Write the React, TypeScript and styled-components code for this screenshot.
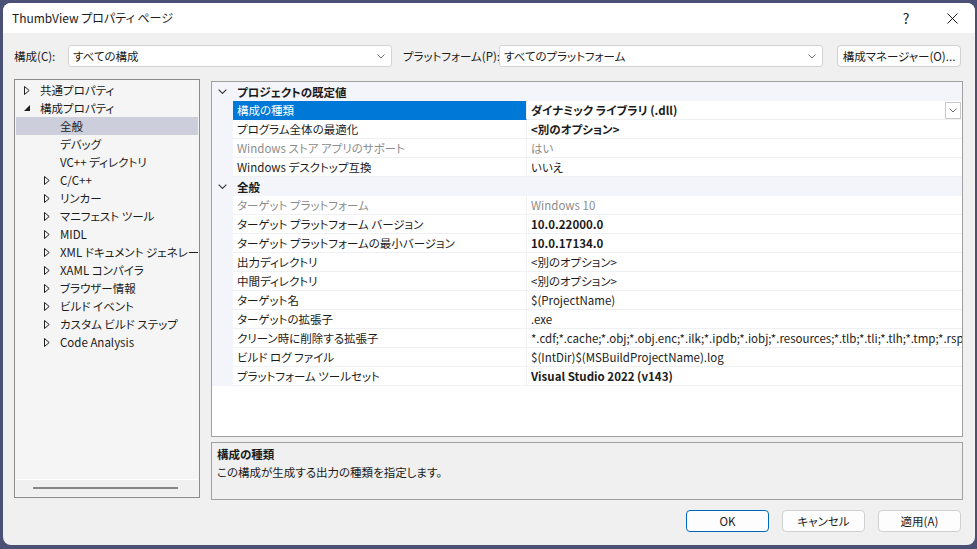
import { FC } from 'react';
import styled, { createGlobalStyle, css } from 'styled-components';

const GlobalStyle = createGlobalStyle`
  html, body {
    margin: 0;
    padding: 0;
    background: #4b5174;
  }
  body {
    font-family: "Noto Sans CJK JP", "Noto Sans", sans-serif;
    font-size: 11.5px;
    color: #1b1b1b;
    font-feature-settings: "palt";
  }
  * { box-sizing: border-box; }
`;

const Window = styled.div`
  margin: 3px;
  width: 972px;
  height: 542px;
  border-radius: 8px;
  background: #f0f0f0;
  overflow: hidden;
  display: flex;
  flex-direction: column;
`;

const TitleBar = styled.div`
  height: 30px;
  background: #ffffff;
  display: flex;
  align-items: center;
  padding-left: 9px;
  flex-shrink: 0;
`;

const Title = styled.div`
  flex: 1;
  font-size: 12px;
  line-height: 30px;
`;

const CaptionButton = styled.div`
  width: 46px;
  height: 30px;
  display: flex;
  align-items: center;
  justify-content: center;
  font-size: 14px;
  color: #1b1b1b;
`;

const Body = styled.div`
  flex: 1;
  display: flex;
  flex-direction: column;
  padding: 12px 12px 13px 11px;
`;

const Toolbar = styled.div`
  display: flex;
  align-items: center;
  height: 22px;
  padding-right: 2px;
`;

const FieldLabel = styled.span<{ $width: number; $indent?: number }>`
  width: ${p => p.$width}px;
  padding-left: ${p => p.$indent ?? 0}px;
  flex-shrink: 0;
  white-space: nowrap;
`;

const Combo = styled.div<{ $width?: number }>`
  ${p => (p.$width ? css`width: ${p.$width}px; flex-shrink: 0;` : css`flex: 1; min-width: 0;`)}
  height: 22px;
  background: #ffffff;
  border: 1px solid #d3d3d3;
  border-radius: 3px;
  display: flex;
  align-items: center;
  padding: 0 6px 0 4px;
  span { flex: 1; white-space: nowrap; }
`;

const Button = styled.button<{ $primary?: boolean; $width: number }>`
  width: ${p => p.$width}px;
  height: 22px;
  background: #fdfdfd;
  border: 1px solid ${p => (p.$primary ? '#0067c0' : '#d0d0d0')};
  border-radius: 4px;
  font: inherit;
  color: #1b1b1b;
  padding: 0;
  flex-shrink: 0;
`;

const ToolbarButton = styled(Button)`
  margin-left: 14px;
`;

const Main = styled.div`
  display: grid;
  grid-template-columns: 186px minmax(0, 1fr);
  column-gap: 11px;
  margin-top: 12px;
`;

const Tree = styled.div`
  height: 419px;
  border: 1px solid #8b8b8b;
  background: #f5f5f5;
  display: flex;
  flex-direction: column;
  padding: 1px;
`;

const TreeItems = styled.div`
  flex: 1;
`;

const TreeRow = styled.div<{ $level: number; $selected?: boolean }>`
  height: 18px;
  line-height: 18px;
  display: flex;
  align-items: center;
  white-space: nowrap;
  overflow: hidden;
  padding-left: ${p => (p.$level === 0 ? 8 : 28)}px;
  ${p => p.$selected && css`background: #cccedb;`}
`;

const Expander = styled.span`
  width: 16px;
  height: 18px;
  display: flex;
  align-items: center;
  flex-shrink: 0;
`;

const HScroll = styled.div`
  height: 17px;
  border-top: 1px solid #ffffff;
  background: #f0f0f0;
  display: flex;
  align-items: center;
  padding-left: 17px;
`;

const ScrollThumb = styled.div`
  width: 145px;
  height: 2px;
  background: #868686;
`;

const RightColumn = styled.div`
  display: flex;
  flex-direction: column;
  padding-top: 2px;
  min-width: 0;
`;

const Grid = styled.div`
  height: 356px;
  border: 1px solid #a0a0a0;
  background: #ffffff;
  overflow: hidden;
`;

const CategoryRow = styled.div`
  height: 19px;
  display: flex;
  align-items: center;
  background: #f3f5fa;
  font-weight: bold;
`;

const Gutter = styled.span`
  width: 21px;
  height: 100%;
  display: flex;
  align-items: center;
  justify-content: center;
  flex-shrink: 0;
  background: #f3f5fa;
`;

const CategoryTitle = styled.span`
  padding-left: 4px;
`;

const PropRow = styled.div`
  height: 19px;
  display: flex;
`;

const NameCell = styled.div<{ $selected?: boolean; $muted?: boolean }>`
  width: 294px;
  flex-shrink: 0;
  padding-left: 4px;
  line-height: 18px;
  border-bottom: 1px solid #eef0f4;
  border-right: 1px solid #eef0f4;
  white-space: nowrap;
  overflow: hidden;
  color: ${p => (p.$muted ? '#8c8c8c' : '#1b1b1b')};
  ${p => p.$selected && css`
    background: #0078d7;
    color: #ffffff;
    border-bottom-color: #0078d7;
  `}
`;

const ValueCell = styled.div<{ $bold?: boolean; $muted?: boolean }>`
  flex: 1;
  min-width: 0;
  display: flex;
  align-items: center;
  padding-left: 4px;
  line-height: 18px;
  border-bottom: 1px solid #eef0f4;
  white-space: nowrap;
  overflow: hidden;
  font-weight: ${p => (p.$bold ? 'bold' : 'normal')};
  color: ${p => (p.$muted ? '#8c8c8c' : '#1b1b1b')};
  span { flex: 1; min-width: 0; overflow: hidden; }
`;

const DropButton = styled.div`
  width: 16px;
  height: 17px;
  border: 1px solid #c8c8c8;
  background: #ffffff;
  display: flex;
  align-items: center;
  justify-content: center;
  margin-right: 1px;
  flex-shrink: 0;
`;

const Description = styled.div`
  height: 58px;
  margin-top: 5px;
  border: 1px solid #a0a0a0;
  background: #f0f0f0;
  padding: 2px 5px;
  line-height: 18px;
`;

const DescTitle = styled.div`
  font-weight: bold;
`;

const Footer = styled.div`
  display: flex;
  justify-content: flex-end;
  gap: 13px;
  margin-top: 10px;
  padding-right: 2px;
`;

const Chevron: FC<{ color?: string; w?: number }> = ({ color = '#6b6b6b', w = 8 }) => (
  <svg width={w} height={w / 2 + 1} viewBox="0 0 8 5">
    <path d="M0.5 0.5 L4 4 L7.5 0.5" fill="none" stroke={color} strokeWidth="1" />
  </svg>
);

const Collapsed = () => (
  <svg width="6" height="9" viewBox="0 0 6 9">
    <path d="M0.5 0.5 L5.2 4.5 L0.5 8.5 Z" fill="none" stroke="#1e1e1e" strokeWidth="1" />
  </svg>
);

const Expanded = () => (
  <svg width="6" height="6" viewBox="0 0 6 6">
    <path d="M6 0 L6 6 L0 6 Z" fill="#1e1e1e" />
  </svg>
);

type Node = { label: string; level: number; kids?: 'open' | 'closed'; selected?: boolean };

const tree: Node[] = [
  { label: '共通プロパティ', level: 0, kids: 'closed' },
  { label: '構成プロパティ', level: 0, kids: 'open' },
  { label: '全般', level: 1, selected: true },
  { label: 'デバッグ', level: 1 },
  { label: 'VC++ ディレクトリ', level: 1 },
  { label: 'C/C++', level: 1, kids: 'closed' },
  { label: 'リンカー', level: 1, kids: 'closed' },
  { label: 'マニフェスト ツール', level: 1, kids: 'closed' },
  { label: 'MIDL', level: 1, kids: 'closed' },
  { label: 'XML ドキュメント ジェネレーター', level: 1, kids: 'closed' },
  { label: 'XAML コンパイラ', level: 1, kids: 'closed' },
  { label: 'ブラウザー情報', level: 1, kids: 'closed' },
  { label: 'ビルド イベント', level: 1, kids: 'closed' },
  { label: 'カスタム ビルド ステップ', level: 1, kids: 'closed' },
  { label: 'Code Analysis', level: 1, kids: 'closed' },
];

type Prop = { name: string; value: string; bold?: boolean; muted?: boolean; selected?: boolean };
type Category = { title: string; props: Prop[] };

const categories: Category[] = [
  {
    title: 'プロジェクトの既定値',
    props: [
      { name: '構成の種類', value: 'ダイナミック ライブラリ (.dll)', bold: true, selected: true },
      { name: 'プログラム全体の最適化', value: '<別のオプション>', bold: true },
      { name: 'Windows ストア アプリのサポート', value: 'はい', muted: true },
      { name: 'Windows デスクトップ互換', value: 'いいえ' },
    ],
  },
  {
    title: '全般',
    props: [
      { name: 'ターゲット プラットフォーム', value: 'Windows 10', muted: true },
      { name: 'ターゲット プラットフォーム バージョン', value: '10.0.22000.0', bold: true },
      { name: 'ターゲット プラットフォームの最小バージョン', value: '10.0.17134.0', bold: true },
      { name: '出力ディレクトリ', value: '<別のオプション>' },
      { name: '中間ディレクトリ', value: '<別のオプション>' },
      { name: 'ターゲット名', value: '$(ProjectName)' },
      { name: 'ターゲットの拡張子', value: '.exe' },
      {
        name: 'クリーン時に削除する拡張子',
        value: '*.cdf;*.cache;*.obj;*.obj.enc;*.ilk;*.ipdb;*.iobj;*.resources;*.tlb;*.tli;*.tlh;*.tmp;*.rsp;*.pgc;*.pgd;*.meta;*.tlog;*.manifest;*.res',
      },
      { name: 'ビルド ログ ファイル', value: '$(IntDir)$(MSBuildProjectName).log' },
      { name: 'プラットフォーム ツールセット', value: 'Visual Studio 2022 (v143)', bold: true },
    ],
  },
];

function App() {
  return (
    <>
      <GlobalStyle />
      <Window>
        <TitleBar>
          <Title>ThumbView プロパティ ページ</Title>
          <CaptionButton>?</CaptionButton>
          <CaptionButton>
            <svg width="11" height="11" viewBox="0 0 11 11">
              <path d="M0.5 0.5 L10.5 10.5 M10.5 0.5 L0.5 10.5" stroke="#1b1b1b" strokeWidth="1" />
            </svg>
          </CaptionButton>
        </TitleBar>
        <Body>
          <Toolbar>
            <FieldLabel $width={54}>構成(C):</FieldLabel>
            <Combo $width={324}>
              <span>すべての構成</span>
              <Chevron />
            </Combo>
            <FieldLabel $width={107} $indent={11}>プラットフォーム(P):</FieldLabel>
            <Combo>
              <span>すべてのプラットフォーム</span>
              <Chevron />
            </Combo>
            <ToolbarButton $width={124}>構成マネージャー(O)...</ToolbarButton>
          </Toolbar>
          <Main>
            <Tree>
              <TreeItems>
                {tree.map(n => (
                  <TreeRow key={n.label} $level={n.level} $selected={n.selected}>
                    <Expander>
                      {n.kids === 'closed' && <Collapsed />}
                      {n.kids === 'open' && <Expanded />}
                    </Expander>
                    <span>{n.label}</span>
                  </TreeRow>
                ))}
              </TreeItems>
              <HScroll>
                <ScrollThumb />
              </HScroll>
            </Tree>
            <RightColumn>
              <Grid>
                {categories.map(c => (
                  <div key={c.title}>
                    <CategoryRow>
                      <Gutter>
                        <Chevron color="#333333" w={9} />
                      </Gutter>
                      <CategoryTitle>{c.title}</CategoryTitle>
                    </CategoryRow>
                    {c.props.map(p => (
                      <PropRow key={p.name}>
                        <Gutter />
                        <NameCell $selected={p.selected} $muted={p.muted}>{p.name}</NameCell>
                        <ValueCell $bold={p.bold} $muted={p.muted}>
                          <span>{p.value}</span>
                          {p.selected && (
                            <DropButton>
                              <Chevron w={8} />
                            </DropButton>
                          )}
                        </ValueCell>
                      </PropRow>
                    ))}
                  </div>
                ))}
              </Grid>
              <Description>
                <DescTitle>構成の種類</DescTitle>
                <div>この構成が生成する出力の種類を指定します。</div>
              </Description>
            </RightColumn>
          </Main>
          <Footer>
            <Button $primary $width={83}>OK</Button>
            <Button $width={83}>キャンセル</Button>
            <Button $width={83}>適用(A)</Button>
          </Footer>
        </Body>
      </Window>
    </>
  );
}

export default App;
